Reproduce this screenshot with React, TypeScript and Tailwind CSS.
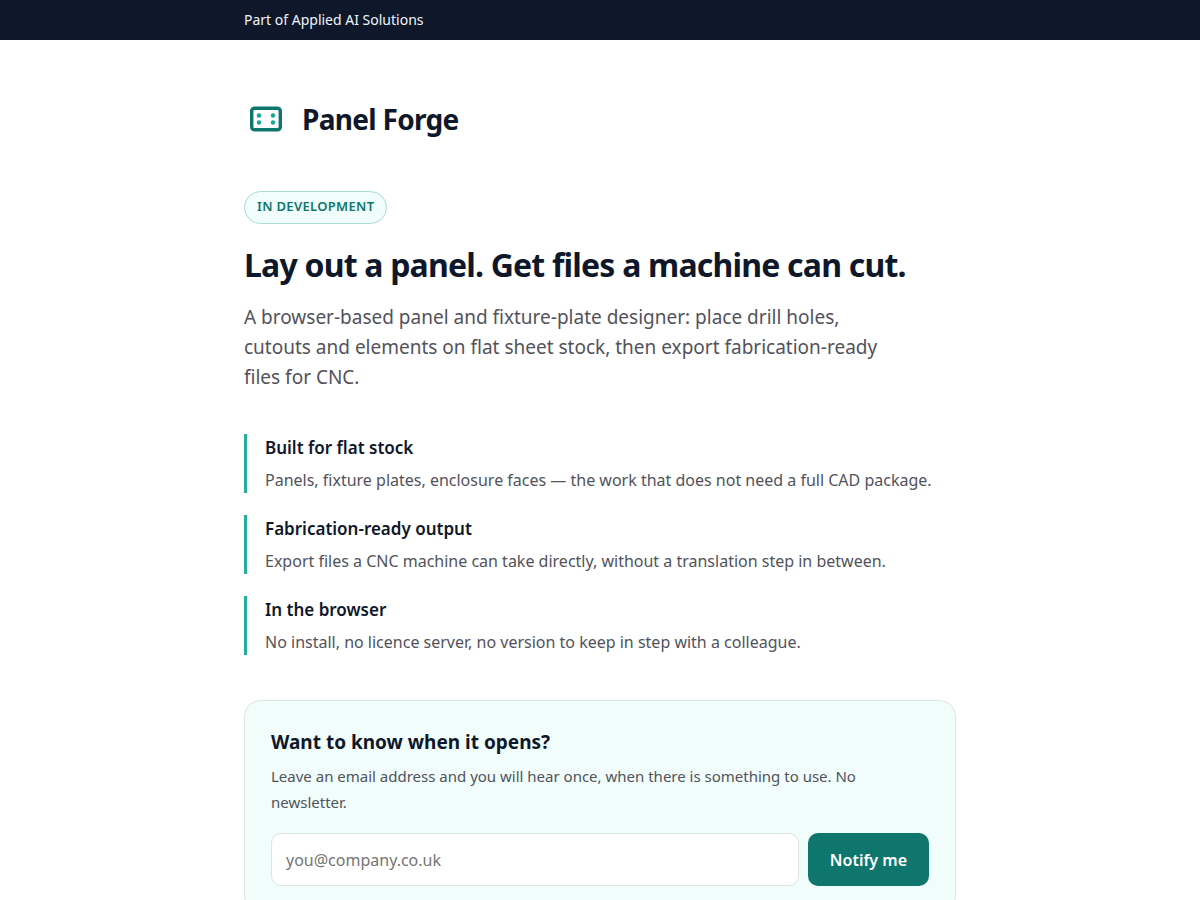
import React from 'react';

interface Feature {
  title: string;
  description: string;
}

const features: Feature[] = [
  {
    title: 'Built for flat stock',
    description:
      'Panels, fixture plates, enclosure faces — the work that does not need a full CAD package.',
  },
  {
    title: 'Fabrication-ready output',
    description:
      'Export files a CNC machine can take directly, without a translation step in between.',
  },
  {
    title: 'In the browser',
    description: 'No install, no licence server, no version to keep in step with a colleague.',
  },
];

const Logo: React.FC = () => (
  <svg viewBox="0 0 44 44" className="size-11" fill="none" aria-hidden="true">
    <rect x="7.7" y="11.2" width="28.6" height="21.6" rx="2.8" stroke="#0f766e" strokeWidth="3.4" />
    <g fill="#14a895">
      <circle cx="15" cy="18.5" r="2.2" />
      <circle cx="29" cy="18.5" r="2.2" />
      <circle cx="15" cy="25.5" r="2.2" />
      <circle cx="29" cy="25.5" r="2.2" />
    </g>
  </svg>
);

const FeatureItem: React.FC<Feature> = ({ title, description }) => (
  <li className="border-l-3 border-[#26ad9c] pl-[18px]">
    <h2 className="text-[17px] leading-7 font-semibold text-slate-900">{title}</h2>
    <p className="mt-[5px] text-base leading-[26px] text-zinc-600">{description}</p>
  </li>
);

const SignupCard: React.FC = () => (
  <section className="mt-[45px] rounded-2xl border border-[#dde5e4] bg-[#f0fdfa] p-[26px]">
    <h2 className="text-[19px] leading-[30px] font-bold text-slate-900">Want to know when it opens?</h2>
    <p className="mt-1.5 text-[15px] leading-[26px] text-zinc-600">
      Leave an email address and you will hear once, when there is something to use. No newsletter.
    </p>
    <form className="mt-[18px] flex gap-[9px]" onSubmit={(e) => e.preventDefault()}>
      <input
        type="email"
        aria-label="Email address"
        placeholder="you@company.co.uk"
        className="h-[53px] min-w-0 flex-1 rounded-[10px] border border-[#dde5e4] bg-white px-3.5 text-base placeholder:text-[#757575]"
      />
      <button
        type="submit"
        className="h-[53px] rounded-[10px] bg-[#0f766e] px-[22px] text-base font-semibold text-white"
      >
        Notify me
      </button>
    </form>
  </section>
);

export default function App() {
  return (
    <div className="min-h-screen bg-white font-['Noto_Sans',sans-serif] text-slate-900">
      <div className="bg-slate-900">
        <div className="mx-auto max-w-[760px] px-6 py-2 text-sm leading-6 text-slate-100">
          <a href="#">Part of Applied AI Solutions</a>
        </div>
      </div>

      <main className="mx-auto max-w-[760px] px-6 pt-14 pb-16">
        <header className="flex items-center gap-3.5">
          <Logo />
          <span className="text-[28px] leading-[46px] font-bold tracking-tight">Panel Forge</span>
        </header>

        <p className="mt-[49px] w-fit rounded-full border border-[#a9dcd5] bg-[#f0fdfa] px-3 pt-[3px] pb-[6px] text-[13px] leading-[22px] font-semibold tracking-wide text-[#0f766e] uppercase">
          In development
        </p>

        <h1 className="mt-5 text-[32px] leading-[42px] font-bold tracking-tight">
          Lay out a panel. Get files a machine can cut.
        </h1>
        <p className="mt-4 max-w-[640px] text-[19px] leading-[30px] text-zinc-600">
          A browser-based panel and fixture-plate designer: place drill holes, cutouts and elements
          on flat sheet stock, then export fabrication-ready files for CNC.
        </p>

        <ul className="mt-[42px] flex flex-col gap-[22px]">
          {features.map((feature) => (
            <FeatureItem key={feature.title} {...feature} />
          ))}
        </ul>

        <SignupCard />
      </main>
    </div>
  );
}
